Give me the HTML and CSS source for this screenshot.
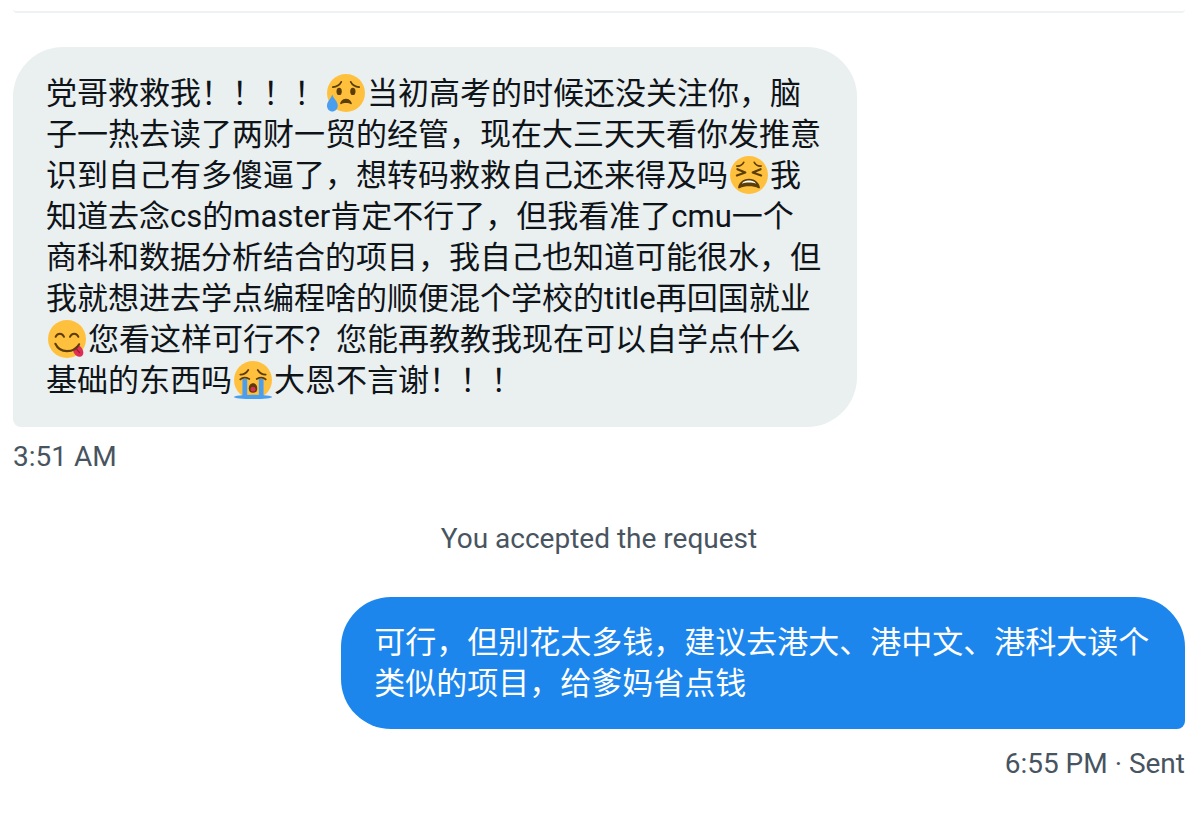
FILE: index.html
```html
<!DOCTYPE html>
<html lang="zh-CN">
<head>
    <meta charset="UTF-8">
    <meta name="viewport" content="width=device-width, initial-scale=1.0">
    <title>Messages</title>
    <link rel="stylesheet" href="styles.css">
</head>
<body>
    <main class="conversation">
        <div class="card-edge"></div>

        <div class="message received">
            <p class="bubble">党哥救救我！！！！<svg class="emoji" viewBox="0 0 36 36" role="img" aria-label="😥">
                <circle cx="18" cy="18" r="18" fill="#ffc13d"/>
                <ellipse cx="11.5" cy="16.5" rx="2.5" ry="3.5" fill="#5c3d05"/>
                <ellipse cx="24.5" cy="16.5" rx="2.5" ry="3.5" fill="#5c3d05"/>
                <path d="M5.5 12.5c3.500-.3 6.500-2 8-5M30.500 12.500c-3.500-.3-6.500-2-8-5" fill="none" stroke="#5c3d05" stroke-width="1.7" stroke-linecap="round"/>
                <path d="M23.5 28c-.2-1-1.6-4.500-5.500-4.500s-5.300 3.500-5.500 4.500c-.1.5.4.9.9.6 1.300-.8 2.600-1.100 4.600-1.100s3.300.3 4.600 1.100c.5.3 1-.1.9-.6z" fill="#5c3d05"/>
                <path d="M0 30c0 3.200 2.300 5.500 5 5.500s5.200-2.300 5.200-5.500c0-4-4-6.500-5.200-10.500C3.800 23.500 0 26 0 30z" fill="#4a9eef"/>
            </svg>当初高考的时候还没关注你，脑子一热去读了两财一贸的经管，现在大三天天看你发推意识到自己有多傻逼了，想转码救救自己还来得及吗<svg class="emoji" viewBox="0 0 36 36" role="img" aria-label="😫">
                <circle cx="18" cy="18" r="18" fill="#ffc13d"/>
                <path d="M6.500 9.500c2.500.2 5-.8 6.500-3.500M29.500 9.500c-2.500.2-5-.8-6.500-3.500" fill="none" stroke="#5c3d05" stroke-width="1.6" stroke-linecap="round"/>
                <path d="M7 12.500l7.500 3.200L6.500 18.500M29 12.500l-7.500 3.200 8 2.800" fill="none" stroke="#5c3d05" stroke-width="2" stroke-linecap="round" stroke-linejoin="round"/>
                <path d="M18 21.500c-6 0-9.500 4-10.300 8-.2 1 .6 1.400 1.400 1 2.500-1.300 5.500-1.800 8.900-1.800s6.400.5 8.900 1.800c.8.4 1.600 0 1.400-1-.8-4-4.300-8-10.300-8z" fill="#5c3d05"/>
                <path d="M11.500 26.200c.3-1.700 3.200-3 6.500-3s6.200 1.300 6.500 3c-1.800-.7-4-1-6.500-1s-4.700.3-6.500 1z" fill="#fff"/>
            </svg>我知道去念cs的master肯定不行了，但我看准了cmu一个商科和数据分析结合的项目，我自己也知道可能很水，但我就想进去学点编程啥的顺便混个学校的title再回国就业<svg class="emoji" viewBox="0 0 36 36" role="img" aria-label="😋">
                <circle cx="18" cy="18" r="18" fill="#ffc13d"/>
                <path d="M7.200 16c1.500-4 6.500-4 8 0M20.800 16c1.500-4 6.500-4 8 0" fill="none" stroke="#5c3d05" stroke-width="1.8" stroke-linecap="round"/>
                <path d="M23.500 27.500l5-4c2.500 1 4.500 4 5 7 .2 2.500-1.500 4.500-4 4.300-3-.3-5.700-3.300-6-7.300z" fill="#dd2e56"/>
                <path d="M26.500 26.500c.8 1.500 2 3 3.500 4.500" fill="none" stroke="#a0142e" stroke-width="1" stroke-linecap="round"/>
                <path d="M7 22.500c2 4.500 6 7 11 7s9.500-2.500 11.500-6.500" fill="none" stroke="#5c3d05" stroke-width="2" stroke-linecap="round"/>
            </svg>您看这样可行不？您能再教教我现在可以自学点什么基础的东西吗<svg class="emoji" viewBox="0 0 36 36" role="img" aria-label="😭">
                <circle cx="18" cy="18" r="18" fill="#ffc13d"/>
                <ellipse cx="18" cy="34" rx="18" ry="2" fill="#4a9eef"/>
                <path d="M8 17h4.500v17H8zM23.500 17H28v17h-4.500z" fill="#4a9eef"/>
                <path d="M6 17.500c2-2 5.500-2 8.500-.5M30 17.500c-2-2-5.500-2-8.500-.5M6 13c3.500-.3 6-2 7.500-4.500M30 13c-3.500-.3-6-2-7.500-4.500" fill="none" stroke="#5c3d05" stroke-width="1.7" stroke-linecap="round"/>
                <path d="M14 26c0-3 1.700-5 4-5s4 2 4 5c0 2.700-1.300 4-4 4s-4-1.300-4-4z" fill="#5c3d05"/>
                <path d="M15.500 27c.3-2 1.200-2.600 2.500-2.600s2.200.6 2.500 2.600c-.2 1.200-1 2-2.500 2s-2.300-.8-2.500-2z" fill="#dd2e56"/>
            </svg>大恩不言谢！！！</p>
            <time class="meta">3:51 AM</time>
        </div>

        <p class="notice">You accepted the request</p>

        <div class="message sent">
            <p class="bubble">可行，但别花太多钱，建议去港大、港中文、港科大读个类似的项目，给爹妈省点钱</p>
            <div class="meta"><time>6:55 PM</time> · Sent</div>
        </div>
    </main>
</body>
</html>
```

FILE: styles.css
```css
* {
    margin: 0;
    padding: 0;
    box-sizing: border-box;
}
body {
    font-family: Roboto, "Noto Sans CJK SC", sans-serif;
    background-color: #fff;
    color: #0f1419;
}
.conversation {
    padding: 0 15px 32px 13px;
}
.card-edge {
    height: 13px;
    border-bottom: 2px solid #eff1f2;
    border-radius: 0 0 4px 4px;
    margin-bottom: 34px;
}
.message {
    display: flex;
    flex-direction: column;
    align-items: flex-start;
}
.message.sent {
    align-items: flex-end;
}
.bubble {
    max-width: 72%;
    padding: 26px 33px;
    font-size: 31px;
    line-height: 41px;
    border-radius: 50px;
}
.received .bubble {
    background-color: #eaeff0;
    border-bottom-left-radius: 8px;
}
.sent .bubble {
    padding: 25px 33px;
    background-color: #1d86ec;
    color: #fff;
    border-bottom-right-radius: 8px;
}
.emoji {
    width: 38px;
    height: 38px;
    margin: 0 2px;
    vertical-align: -8px;
}
.meta, .notice {
    font-size: 28px;
    line-height: 34px;
    color: #48545f;
}
.meta {
    margin-top: 13px;
}
.sent .meta {
    margin-top: 18px;
}
.notice {
    text-align: center;
    margin: 48px 0 41px;
}
```
